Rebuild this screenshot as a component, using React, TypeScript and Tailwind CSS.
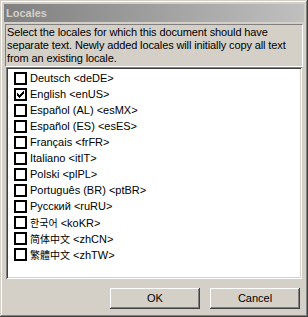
import React from "react";

type Loc = { name: string; code: string; checked?: boolean; cjk?: "kr" | "sc" | "tc" };

const locales: Loc[] = [
  { name: "Deutsch", code: "<deDE>" },
  { name: "English", code: "<enUS>", checked: true },
  { name: "Español (AL)", code: "<esMX>" },
  { name: "Español (ES)", code: "<esES>" },
  { name: "Français", code: "<frFR>" },
  { name: "Italiano", code: "<itIT>" },
  { name: "Polski", code: "<plPL>" },
  { name: "Português (BR)", code: "<ptBR>" },
  { name: "Русский", code: "<ruRU>" },
  { name: "한국어", code: "<koKR>", cjk: "kr" },
  { name: "简体中文", code: "<zhCN>", cjk: "sc" },
  { name: "繁體中文", code: "<zhTW>", cjk: "tc" },
];

function Check() {
  const px: [number, number][] = [
    [6, 0],
    [5, 1], [6, 1],
    [0, 2], [4, 2], [5, 2], [6, 2],
    [0, 3], [1, 3], [3, 3], [4, 3], [5, 3],
    [0, 4], [1, 4], [2, 4], [3, 4], [4, 4],
    [1, 5], [2, 5], [3, 5],
    [2, 6],
  ];
  return (
    <svg width="9" height="9" viewBox="0 0 9 9" shapeRendering="crispEdges">
      {px.map(([x, y], i) => (
        <rect key={i} x={x + 1} y={y + 1} width="1" height="1" fill="#000" />
      ))}
    </svg>
  );
}

function Row({ l }: { l: Loc }) {
  const cjkClass =
    l.cjk === "kr"
      ? "font-['Noto_Sans_CJK_KR',sans-serif] text-[10px]"
      : l.cjk === "sc"
      ? "font-['Noto_Sans_CJK_SC',sans-serif] text-[10px]"
      : l.cjk === "tc"
      ? "font-['Noto_Sans_CJK_TC',sans-serif] text-[10px]"
      : "";
  return (
    <div className="flex h-[16px] items-start">
      <div className="flex h-[13px] w-[13px] shrink-0 items-center justify-center border-2 border-black bg-white">
        {l.checked ? <Check /> : null}
      </div>
      <div className="ml-[3px] whitespace-nowrap text-[11px] leading-[13px] text-black">
        <span className={cjkClass}>{l.name}</span> {l.code}
      </div>
    </div>
  );
}

function Button({ children }: { children: React.ReactNode }) {
  return (
    <div className="flex h-[21px] w-[90px] items-center justify-center bg-[#d4d0c8] text-[11px] leading-[13px] text-black shadow-[inset_-1px_-1px_#404040,inset_1px_1px_#ffffff,inset_-2px_-2px_#808080,inset_2px_2px_#d4d0c8]">
      {children}
    </div>
  );
}

export default function App() {
  return (
    <div className="h-[317px] w-[308px] bg-[#d4d0c8] p-[4px] font-['Liberation_Sans','Noto_Sans_CJK_SC',sans-serif] shadow-[inset_-1px_-1px_#404040,inset_1px_1px_#d4d0c8,inset_-2px_-2px_#808080,inset_2px_2px_#ffffff]">
      <div className="flex h-[309px] flex-col">
        <div className="h-[18px] bg-gradient-to-r from-[#808080] to-[#c0c0c0] pl-[2px] text-[11px] font-bold leading-[18px] text-[#d4d0c8]">
          Locales
        </div>
        <div className="mx-[1px] mt-[2px] h-[43px] border border-b-white border-l-[#808080] border-r-white border-t-[#808080] pl-[1px] pt-[1px] text-[11px] leading-[13px] tracking-[-0.12px] text-black">
          <div>Select the locales for which this document should have</div>
          <div>separate text. Newly added locales will initially copy all text</div>
          <div>from an existing locale.</div>
        </div>
        <div className="ml-[2px] mr-[2px] h-[212px] bg-white pl-[8px] pt-[5px] shadow-[inset_1px_1px_#808080,inset_-1px_-1px_#ffffff,inset_2px_2px_#404040,inset_-2px_-2px_#d4d0c8]">
          {locales.map((l) => (
            <Row key={l.code} l={l} />
          ))}
        </div>
        <div className="mr-[4px] mt-[9px] flex justify-end gap-[10px]">
          <Button>OK</Button>
          <Button>Cancel</Button>
        </div>
      </div>
    </div>
  );
}
